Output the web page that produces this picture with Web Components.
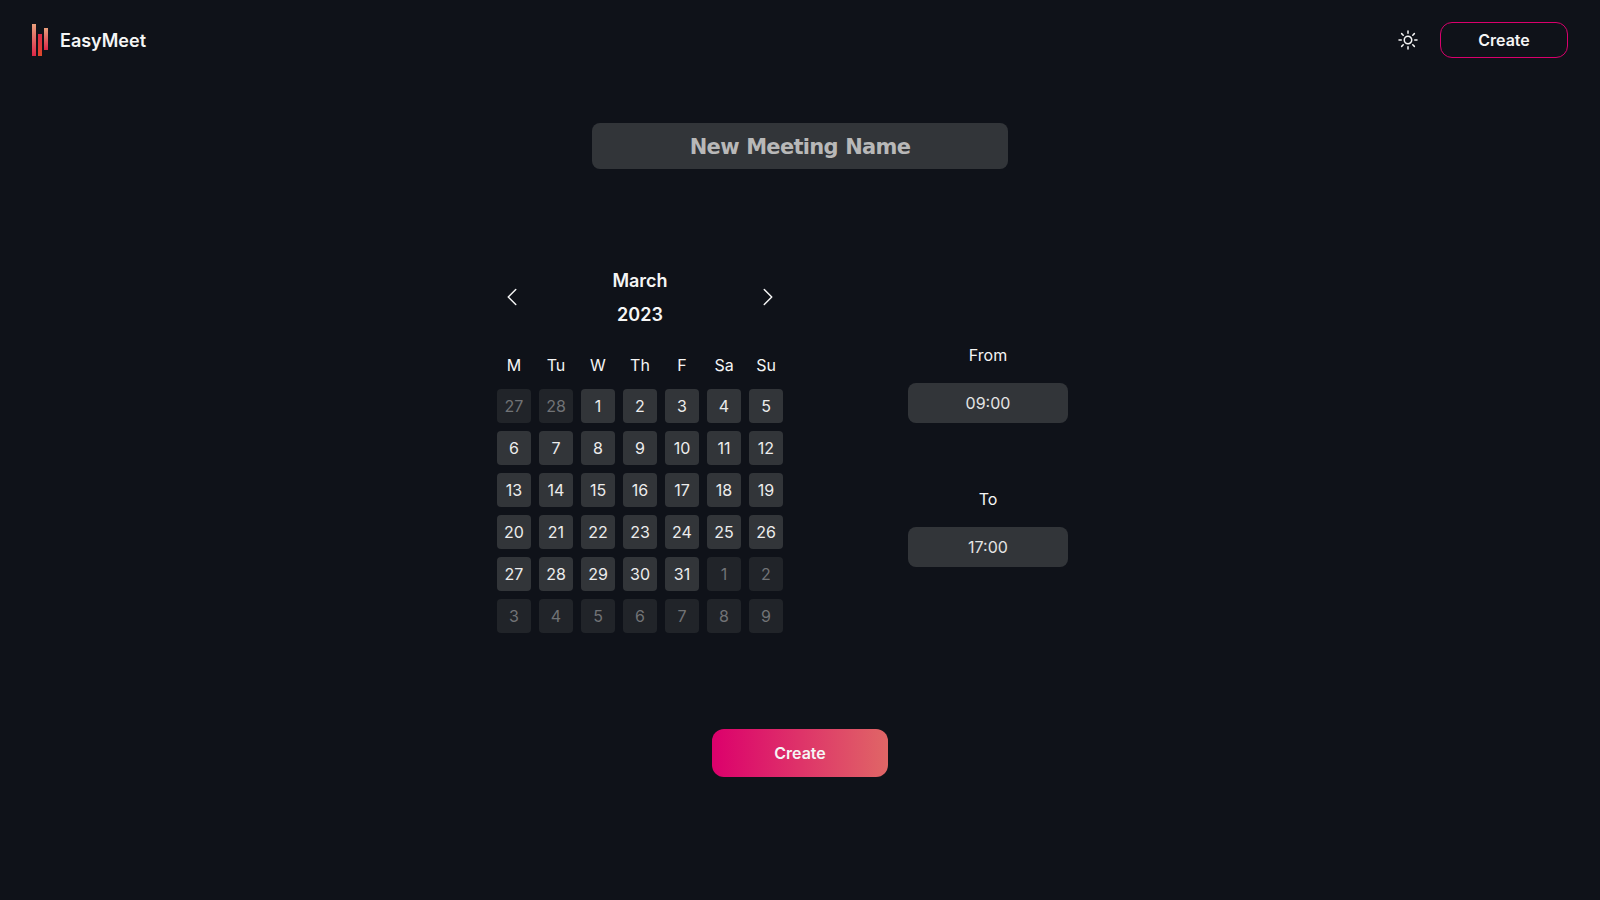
<!DOCTYPE html>
<html lang="en">
<head>
<meta charset="utf-8">
<title>EasyMeet</title>
<style>
html,body{margin:0;height:100%;background:#0f1219;overflow:hidden}
body{color:#f5f5f5;font:400 16px/20px Inter,sans-serif}
</style>
</head>
<body>
<meet-app></meet-app>
<script>
const define = (name, html, setup) => customElements.define(name, class extends HTMLElement {
  connectedCallback() {
    if (this.shadowRoot) return;
    const t = document.createElement('template');
    t.innerHTML = html;
    this.attachShadow({mode: 'open'}).append(t.content.cloneNode(true));
    if (setup) setup(this, this.shadowRoot);
  }
});

define('meet-logo', `
<style>
:host{display:flex;align-items:center;gap:12px;font-weight:600;font-size:18px}
svg{display:block}
span{padding-top:2px}
</style>
<svg width="16" height="32" viewBox="0 0 16 32">
<defs>
<linearGradient id="a" x1="0" y1="0" x2="0" y2="1"><stop stop-color="#e99f7c"/><stop offset="1" stop-color="#dc2647"/></linearGradient>
<linearGradient id="b" x1="0" y1="0" x2="0" y2="1"><stop stop-color="#dc2647"/><stop offset="1" stop-color="#dc4a2b"/></linearGradient>
</defs>
<rect width="4" height="32" fill="url(#a)"/><rect x="6" y="10" width="4" height="22" fill="url(#b)"/><rect x="12" y="4" width="4" height="22" fill="url(#a)"/>
</svg><span><slot></slot></span>`);

define('meet-icon', `
<style>:host{display:block;width:24px;height:24px}svg{display:block}</style>
<svg width="24" height="24" viewBox="0 0 24 24" fill="none" stroke="currentColor" stroke-width="1.5" stroke-linecap="round" stroke-linejoin="round"><path/></svg>`,
(host, root) => root.querySelector('path').setAttribute('d', {
  sun: 'M12 3v2.25m6.364.386l-1.591 1.591M21 12h-2.25m-.386 6.364l-1.591-1.591M12 18.75V21m-4.773-4.227l-1.591 1.591M5.25 12H3m4.227-4.773L5.636 5.636M15.75 12a3.75 3.75 0 11-7.5 0 3.75 3.75 0 017.5 0z',
  left: 'M15.75 19.5L8.25 12l7.5-7.5',
  right: 'M8.25 4.5l7.5 7.5-7.5 7.5'
}[host.getAttribute('name')]));

define('meet-button', `
<style>
:host{display:block;width:128px;height:36px}
button{box-sizing:border-box;width:100%;height:100%;margin:0;padding:0;border:1px solid #d9006c;border-radius:12px;background:none;color:#f5f5f5;font:600 16px/20px Inter,sans-serif}
:host([primary]){width:176px;height:48px}
:host([primary]) button{border:0;background:linear-gradient(90deg,#dc006c,#e06666)}
</style><button><slot></slot></button>`);

define('meet-header', `
<style>
:host{display:flex;align-items:center;justify-content:space-between;height:80px;padding:0 32px;box-sizing:border-box}
div{display:flex;align-items:center;gap:20px}
</style>
<meet-logo>EasyMeet</meet-logo>
<div><meet-icon name="sun"></meet-icon><meet-button>Create</meet-button></div>`);

define('meet-name', `
<style>
:host{display:block;width:416px;height:46px}
input{box-sizing:border-box;width:100%;height:100%;border:0;padding:2px 8px 0;border-radius:8px;background:#323539;color:#f5f5f5;text-align:center;font:700 21px "DejaVu Sans",sans-serif;letter-spacing:-.7px;word-spacing:.7px}
input::placeholder{color:#b8b8b8;opacity:1}
</style><input placeholder="New Meeting Name">`);

define('meet-day', `
<style>
:host{display:flex;align-items:center;justify-content:center;height:34px;border-radius:4px;background:#323539;color:#ececec}
:host([muted]){background:#212429;color:#717376}
</style><slot></slot>`);

define('meet-calendar', `
<style>
:host{display:block;width:286px}
header{display:flex;align-items:center;justify-content:space-between;height:68px;padding:0 3px}
h2{margin:0;padding-top:2px;font:600 18px/34px Inter,sans-serif;text-align:center}
h2 span{display:block}
.week,.days{display:grid;grid-template-columns:repeat(7,34px);gap:8px}
.week{margin:24px 0 14px;text-align:center}
</style>
<header><meet-icon name="left"></meet-icon><h2><span>March</span><span>2023</span></h2><meet-icon name="right"></meet-icon></header>
<div class="week"></div><div class="days"></div>`,
(host, root) => {
  for (const name of ['M','Tu','W','Th','F','Sa','Su']) {
    const el = document.createElement('span');
    el.textContent = name;
    root.querySelector('.week').append(el);
  }
  for (let i = 0; i < 42; i++) {
    const date = new Date(2023, 1, 27 + i);
    const el = document.createElement('meet-day');
    el.textContent = date.getDate();
    el.toggleAttribute('muted', date.getMonth() !== 2);
    root.querySelector('.days').append(el);
  }
});

define('meet-time', `
<style>
:host{display:flex;flex-direction:column;align-items:center;gap:18px;width:160px}
div{display:flex;align-items:center;justify-content:center;width:100%;height:40px;border-radius:8px;background:#323539;color:#e4e4e4}
</style><span><slot name="label"></slot></span><div><slot></slot></div>`);

define('meet-app', `
<style>
:host{display:block;height:900px}
main{display:flex;flex-direction:column;align-items:center;padding-top:43px}
.plan{display:flex;align-items:center;gap:125px;margin:94px 0 96px;padding-right:35px}
.times{display:flex;flex-direction:column;gap:66px;padding-top:16px}
</style>
<meet-header></meet-header>
<main>
<meet-name></meet-name>
<section class="plan">
<meet-calendar></meet-calendar>
<div class="times">
<meet-time><span slot="label">From</span>09:00</meet-time>
<meet-time><span slot="label">To</span>17:00</meet-time>
</div>
</section>
<meet-button primary>Create</meet-button>
</main>`);
</script>
</body>
</html>
